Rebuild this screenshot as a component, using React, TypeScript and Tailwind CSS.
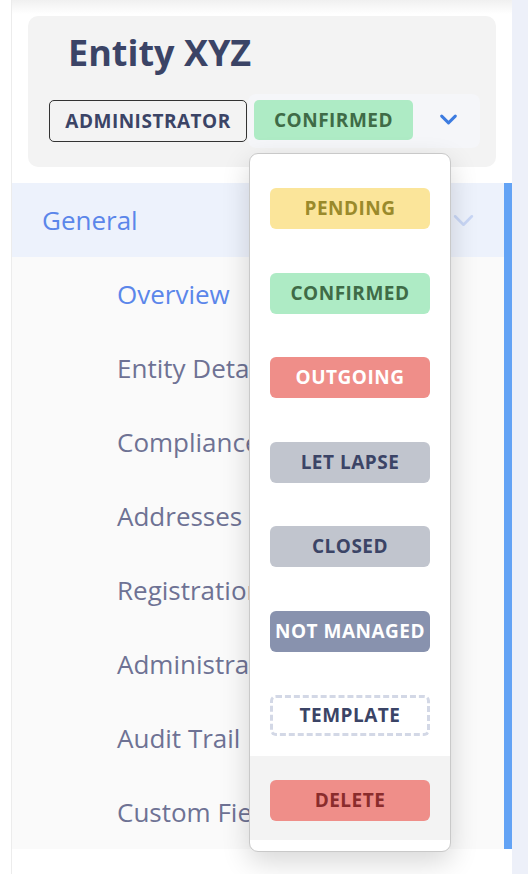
import React from 'react';

const statuses = [
    { label: 'PENDING', cls: 'bg-[#fbe59a] text-[#9a8a2b]' },
    { label: 'CONFIRMED', cls: 'bg-[#aeebc5] text-[#3f6b47]' },
    { label: 'OUTGOING', cls: 'bg-[#ef8e89] text-white' },
    { label: 'LET LAPSE', cls: 'bg-[#c1c5ce] text-[#3b4466]' },
    { label: 'CLOSED', cls: 'bg-[#c1c5ce] text-[#3b4466]' },
    { label: 'NOT MANAGED', cls: 'bg-[#8892ae] text-white' },
    { label: 'TEMPLATE', cls: 'border-[3px] border-dashed border-[#d3d8e6] text-[#3b4466]' },
];

const subItems = ['Overview', 'Entity Details', 'Compliance', 'Addresses', 'Registrations', 'Administrators', 'Audit Trail', 'Custom Fields'];

function Chevron({ className, stroke }: { className: string; stroke: number }) {
    return (
        <svg viewBox="0 0 20 12" fill="none" className={className}>
            <path d="M2 2l8 8 8-8" stroke="currentColor" strokeWidth={stroke} strokeLinecap="round" strokeLinejoin="round" />
        </svg>
    );
}

export default function App() {
    return (
        <div className="relative flex h-[874px] w-[528px] overflow-hidden bg-white font-['Open_Sans',sans-serif]">
            <div className="w-[12px] shrink-0 border-r border-[#ececec] bg-white" />

            <div className="flex w-[500px] shrink-0 flex-col bg-white">
                <div className="bg-[linear-gradient(to_bottom,#f0f0f0_0px,#ffffff_14px)] px-[16px] pt-[16px]">
                    <div className="rounded-[10px] bg-[#f3f3f3] pt-[14px] pb-[19px]">
                        <div className="flex h-[46px] items-center pl-[40px] text-[36px] font-bold text-[#3b4466]">
                            Entity XYZ
                        </div>
                        <div className="mt-[18px] flex items-start pl-[21px]">
                            <div className="mt-[6px] flex h-[42px] w-[198px] items-center justify-center rounded-[5px] border-[1.5px] border-[#333] text-[19px] font-bold tracking-[0.5px] text-[#3b4466]">
                                ADMINISTRATOR
                            </div>
                            <div className="ml-[1px] flex h-[54px] w-[232px] items-start rounded-[8px] bg-[#f5f6f9] pt-[6px] pl-[6px]">
                                <div className="flex h-[40px] w-[159px] items-center justify-center rounded-[5px] bg-[#aeebc5] text-[19px] font-bold tracking-[0.5px] text-[#3f6b47]">
                                    CONFIRMED
                                </div>
                                <Chevron className="ml-[27px] mt-[14px] h-[11px] w-[17px] text-[#3c7be0]" stroke={3.5} />
                            </div>
                        </div>
                    </div>
                </div>

                <div className="mt-[16px] flex">
                    <div className="flex-1">
                        <div className="flex h-[74px] items-center justify-between bg-[#edf2fc] pl-[30px] pr-[30px]">
                            <span className="text-[26px] text-[#5b86ea]">General</span>
                            <Chevron className="h-[13px] w-[21px] text-[#c9d7f6]" stroke={2.5} />
                        </div>
                        <div className="bg-[#fafafa]">
                            {subItems.map((item, i) => (
                                <div key={item} className="flex h-[74px] items-center whitespace-nowrap pl-[105px]">
                                    <span className={`text-[26px] ${i === 0 ? 'text-[#5b86ea]' : 'text-[#6e7294]'}`}>{item}</span>
                                </div>
                            ))}
                        </div>
                    </div>
                    <div className="w-[8px] bg-[#63a3f5]" />
                </div>
            </div>

            <div className="flex-1 bg-[#edf0f9]" />

            <div className="absolute top-[153px] left-[249px] w-[202px] overflow-hidden rounded-[9px] border border-[#c9c9c9] bg-white pt-[10px] pb-[11px] shadow-[0_10px_28px_rgba(0,0,0,0.16)]">
                {statuses.map((s) => (
                    <div key={s.label} className="h-[84.5px] pt-[24px] pl-[20px]">
                        <div className={`flex h-[41px] w-[160px] items-center justify-center rounded-[6px] text-[19px] font-bold tracking-[0.5px] whitespace-nowrap ${s.cls}`}>
                            {s.label}
                        </div>
                    </div>
                ))}
                <div className="h-[84.5px] bg-[#f3f3f3] pt-[24px] pl-[20px]">
                    <div className="flex h-[41px] w-[160px] items-center justify-center rounded-[6px] bg-[#ef8e89] text-[19px] font-bold tracking-[0.5px] text-[#8a2c2c]">
                        DELETE
                    </div>
                </div>
            </div>
        </div>
    );
}
